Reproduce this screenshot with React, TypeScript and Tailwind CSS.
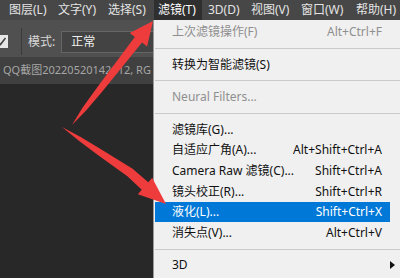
import React from "react";

const font = "font-['Noto_Sans','Noto_Sans_CJK_SC',sans-serif]";

type Item =
  | { kind: "sep" }
  | { kind: "item"; label: string; shortcut?: string; disabled?: boolean; active?: boolean; sub?: boolean };

const items: Item[] = [
  { kind: "item", label: "上次滤镜操作(F)", shortcut: "Alt+Ctrl+F", disabled: true },
  { kind: "sep" },
  { kind: "item", label: "转换为智能滤镜(S)" },
  { kind: "sep" },
  { kind: "item", label: "Neural Filters...", disabled: true },
  { kind: "sep" },
  { kind: "item", label: "滤镜库(G)..." },
  { kind: "item", label: "自适应广角(A)...", shortcut: "Alt+Shift+Ctrl+A" },
  { kind: "item", label: "Camera Raw 滤镜(C)...", shortcut: "Shift+Ctrl+A" },
  { kind: "item", label: "镜头校正(R)...", shortcut: "Shift+Ctrl+R" },
  { kind: "item", label: "液化(L)...", shortcut: "Shift+Ctrl+X", active: true },
  { kind: "item", label: "消失点(V)...", shortcut: "Alt+Ctrl+V" },
  { kind: "sep" },
  { kind: "item", label: "3D", sub: true },
];

const menus = [
  { t: "图层(L)", w: "w-[49px]" },
  { t: "文字(Y)", w: "w-[50px]" },
  { t: "选择(S)", w: "w-[50px]" },
  { t: "滤镜(T)", w: "w-[48px]", active: true },
  { t: "3D(D)", w: "w-[43px]" },
  { t: "视图(V)", w: "w-[50px]" },
  { t: "窗口(W)", w: "w-[55px]" },
  { t: "帮助(H)", w: "w-[48px]" },
];

export default function App() {
  return (
    <div className={`relative w-[400px] h-[278px] overflow-hidden bg-[#282828] flex flex-col ${font} text-[12px]`}>
      {/* menu bar */}
      <div className="h-[20px] bg-[#474747] flex items-stretch pl-[5px] shrink-0">
        {menus.map((m) => (
          <div
            key={m.t}
            className={`${m.w} pl-[4px] flex items-center whitespace-nowrap ${
              m.active ? "bg-[#2f2f2f] text-white mr-[2px]" : "text-[#e4e4e4]"
            }`}
          >
            {m.t}
          </div>
        ))}
      </div>

      {/* options bar */}
      <div className="h-[37px] bg-[#505050] flex items-center pt-[6px] shrink-0">
        <div className="ml-[-5px] w-[13px] h-[13px] bg-[#e6e6e6] flex items-center justify-center">
          <svg width="11" height="11" viewBox="0 0 11 11">
            <path d="M2 6 L4.5 8.5 L9.5 2" stroke="#444" strokeWidth="1.6" fill="none" />
          </svg>
        </div>
        <div className="ml-[13px] w-[1px] h-[27px] bg-[#3a3a3a]" />
        <div className="ml-[6px] text-[#d8d8d8] whitespace-nowrap">模式:</div>
        <div className="ml-[6px] w-[110px] h-[22px] border border-[#666666] bg-[#434343] flex items-center pl-[9px] text-[#f0f0f0] shrink-0">
          正常
        </div>
      </div>

      {/* tab bar */}
      <div className="h-[27px] bg-[#404040] flex items-center shrink-0">
        <div className="pl-[3px] text-[#a6a6a6] whitespace-nowrap text-[11px]">
          QQ截图20220520142812, RG
        </div>
      </div>

      {/* canvas */}
      <div className="flex-1 bg-[#282828]" />

      {/* dropdown menu */}
      <div className="absolute left-[153px] top-[20px] w-[252px] h-[262px] bg-[#f0f0f0] border-l border-[#9a9a9a] pt-[1.7px]">
        {items.map((it, i) =>
          it.kind === "sep" ? (
            <div key={i} className="h-[12px] ml-[1px] flex items-center">
              <div className="w-full h-[1px] bg-[#cacaca]" />
            </div>
          ) : (
            <div
              key={i}
              className={`h-[20.6px] ml-[1px] ${it.sub ? "w-[240px]" : "w-[235px]"} flex items-center justify-between pl-[17px] ${
                it.sub ? "pr-0" : "pr-[8px]"
              } whitespace-nowrap ${
                it.active ? "bg-[#0078d7] text-white" : it.disabled ? "text-[#8f8f8f]" : "text-[#111111]"
              }`}
            >
              <span>{it.label}</span>
              {it.shortcut && <span>{it.shortcut}</span>}
              {it.sub && (
                <svg width="5" height="8" viewBox="0 0 5 8">
                  <path d="M0 0 L5 4 L0 8 Z" fill="#111" />
                </svg>
              )}
            </div>
          )
        )}
      </div>

      {/* red arrows overlay */}
      <svg className="absolute left-0 top-0 pointer-events-none" width="400" height="278" viewBox="0 0 400 278">
        <polygon
          fill="#ee3b3b"
          points="72,125 86.1,110.6 102.3,91.5 142,42.6 147.1,46.6 153,21 129.7,33 134.8,37 97.1,87.5 82.5,107.8"
        />
        <polygon
          fill="#ee3b3b"
          points="62,127 78.9,140.7 98.2,155.2 127.4,176.3 141.75,189.8 137.85,194.3 166,204 152.15,177.7 148.25,182.2 132.6,168.7 101.8,149.8 81.1,137.3"
        />
      </svg>
    </div>
  );
}
